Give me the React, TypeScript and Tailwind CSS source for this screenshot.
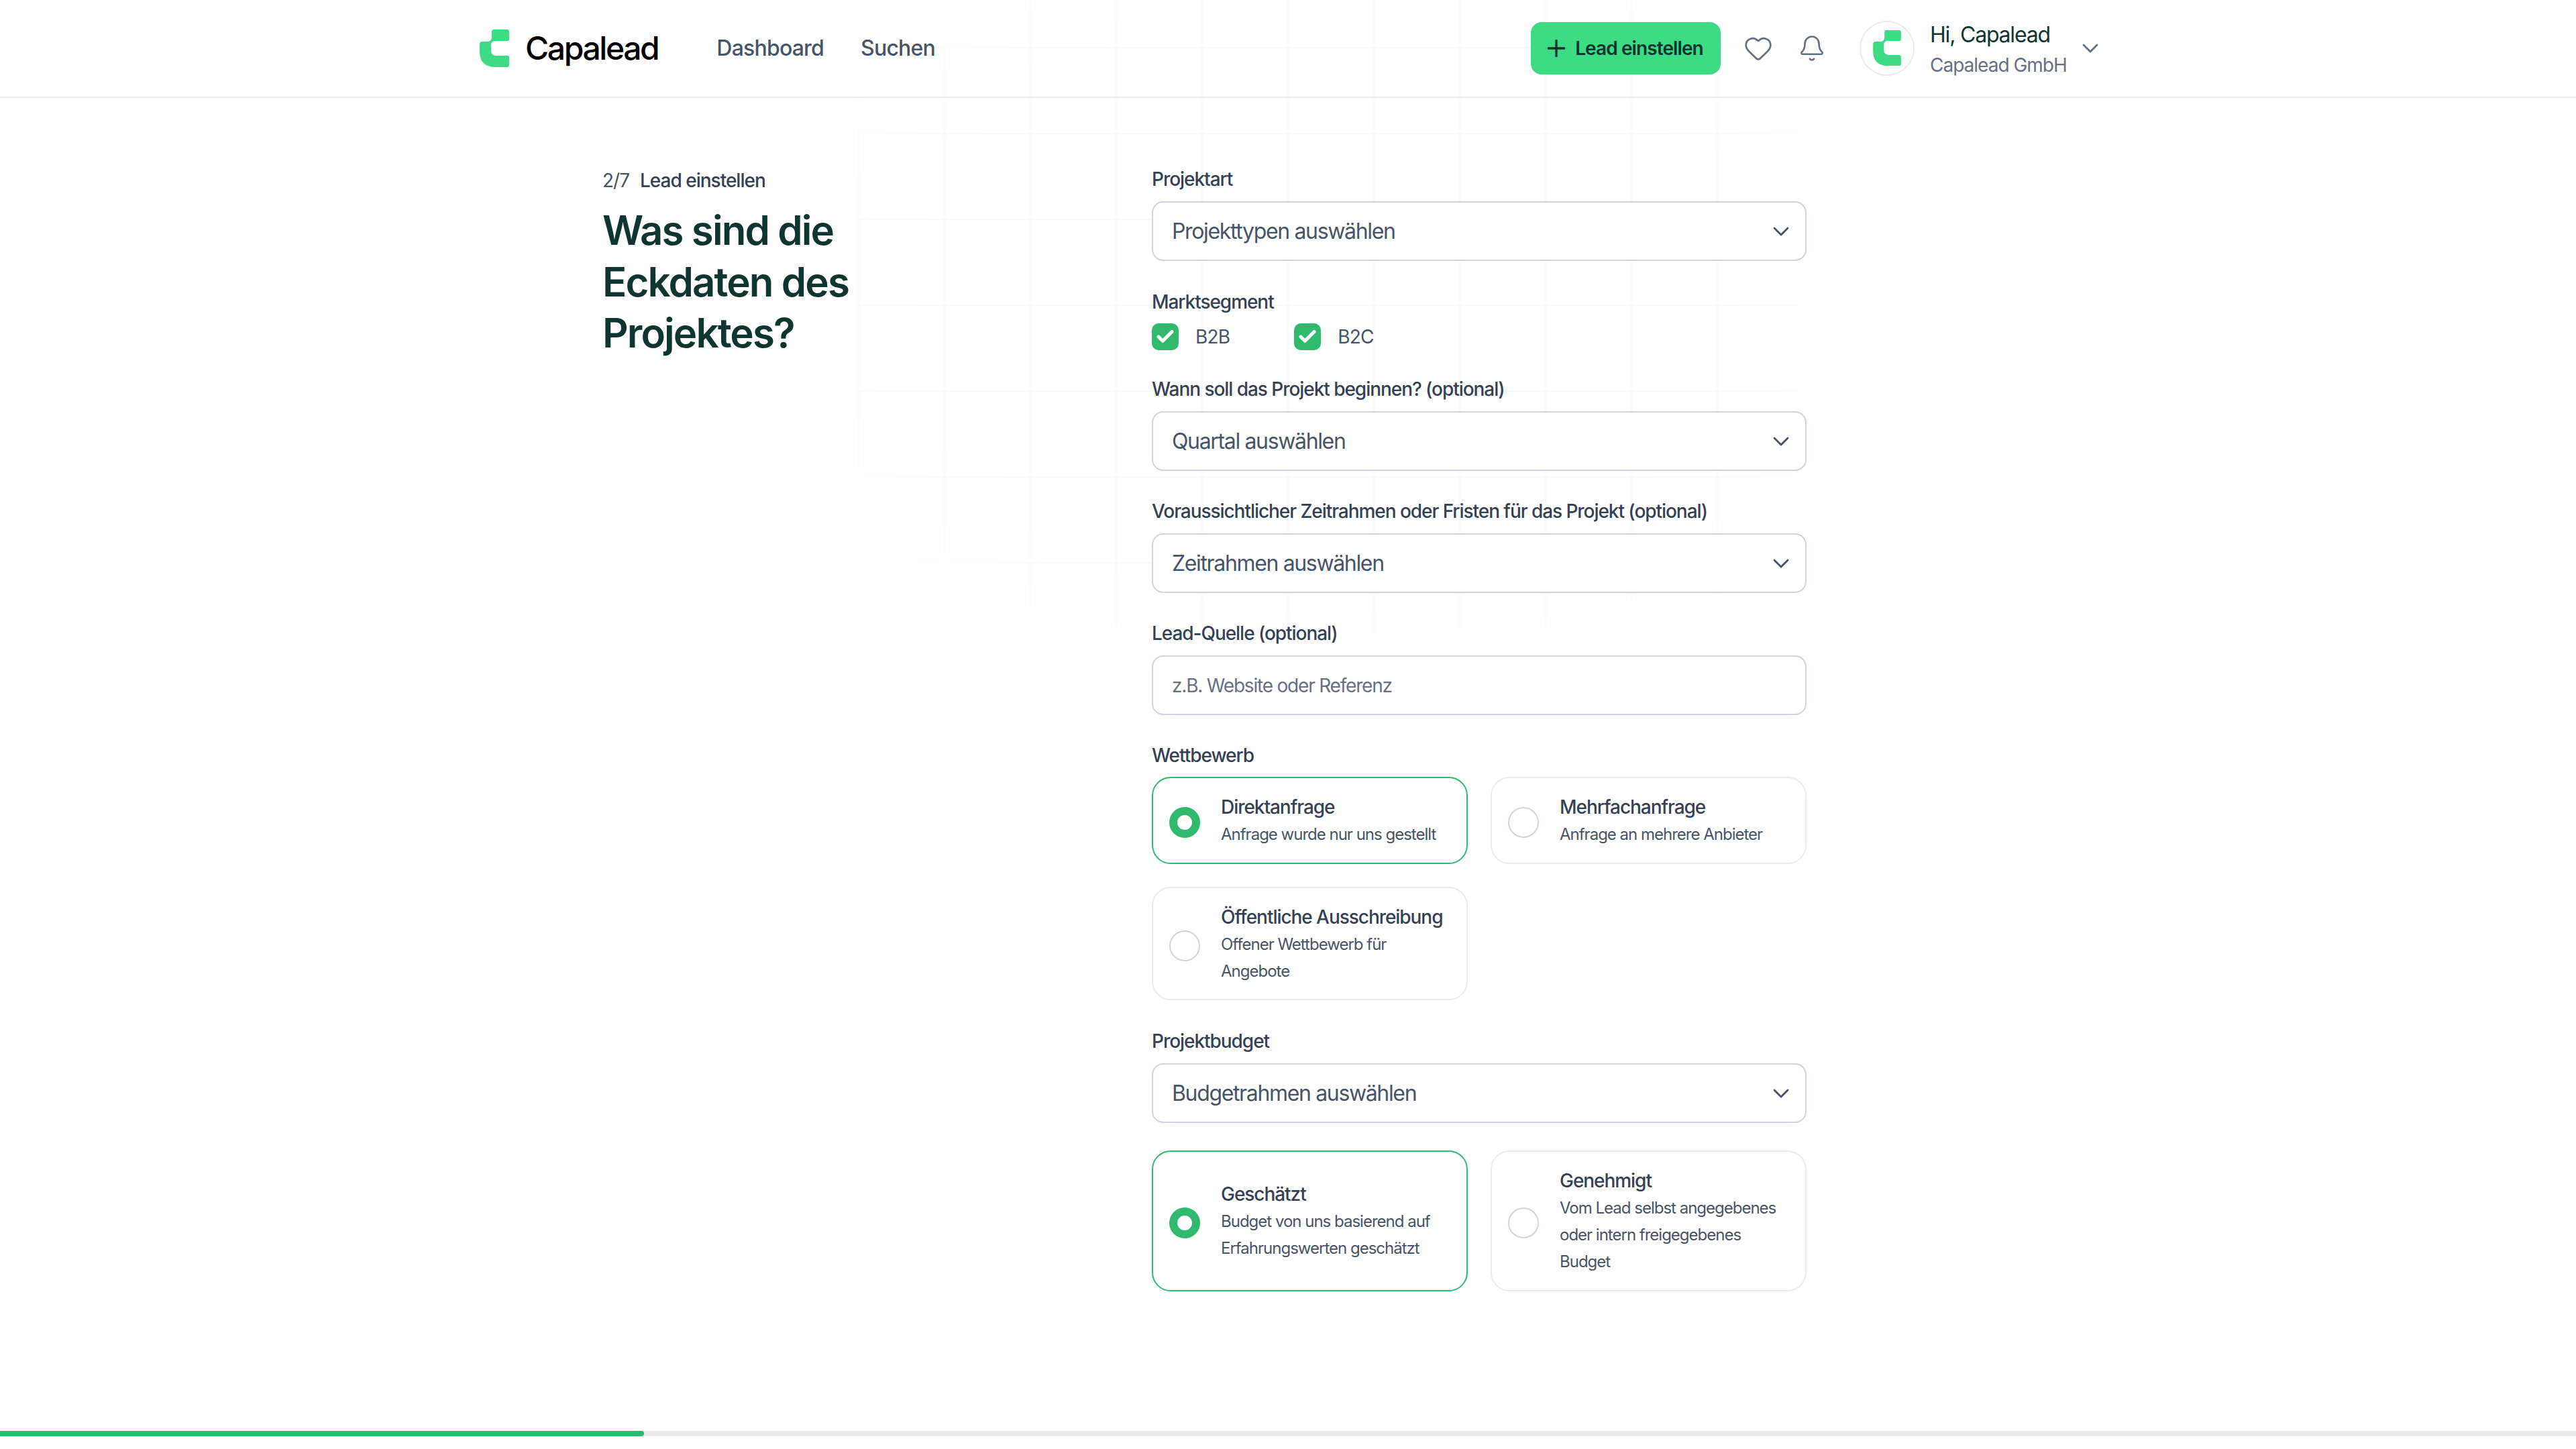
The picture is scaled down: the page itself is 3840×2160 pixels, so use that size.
import { Bell, Check, ChevronDown, Heart, Plus } from "lucide-react";

const Logo = ({ className }: { className: string }) => (
  <svg viewBox="0 0 44 57" className={className}>
    <path
      fill="#3DDC84"
      d="M18 3Q18 0 21 0H41Q44 0 44 3V14Q44 17 41 17H23Q17 17 17 23V31Q17 39 25 39H41Q44 39 44 42V53Q44 56 41 56H24Q0 56 0 33V22Q0 18 4 18H11Q18 18 18 11Z"
    />
  </svg>
);

const Label = ({ children }: { children: string }) => (
  <div className="text-[28px] leading-[40px] font-medium tracking-[-1.05px] text-[#344054]">{children}</div>
);

const SelectBox = ({ text }: { text: string }) => (
  <div className="mt-[13px] flex h-[89px] items-center justify-between rounded-[17px] border-[2.4px] border-[#d0d4e0] bg-white pl-[28px] pr-[16px]">
    <span className="text-[32px] tracking-[-1.35px] text-[#475467]">{text}</span>
    <ChevronDown className="size-[40px] text-[#475467]" strokeWidth={1.7} />
  </div>
);

const Radio = ({ on }: { on: boolean }) =>
  on ? (
    <div className="mt-[6px] size-[46px] shrink-0 rounded-full border-[12px] border-[#30ba6e] bg-white" />
  ) : (
    <div className="mt-[6px] size-[46px] shrink-0 rounded-full border-[2.4px] border-[#d0d4e0] bg-white" />
  );

const OptionCard = ({
  title,
  lines,
  on = false,
  className,
}: {
  title: string;
  lines: string[];
  on?: boolean;
  className: string;
}) => (
  <div
    className={`flex items-center gap-[31px] rounded-[28px] border-[2.4px] bg-white pl-[24px] ${className} ${
      on ? "border-[#30ba6e]" : "border-[#eaeaf0]"
    }`}
  >
    <Radio on={on} />
    <div>
      <div className="text-[28px] leading-[42px] font-medium tracking-[-1.05px] text-[#344054]">{title}</div>
      {lines.map((line) => (
        <div key={line} className="text-[24px] leading-[40px] tracking-[-1px] text-[#475467]">
          {line}
        </div>
      ))}
    </div>
  </div>
);

const CheckItem = ({ label }: { label: string }) => (
  <div className="flex items-center gap-[25px]">
    <div className="flex size-[40px] items-center justify-center rounded-[10px] bg-[#30ba6e]">
      <Check className="size-[30px] text-white" strokeWidth={4} />
    </div>
    <span className="text-[28px] leading-[40px] tracking-[-0.8px] text-[#475467]">{label}</span>
  </div>
);

export default function App() {
  return (
    <div className="relative h-[2160px] w-full overflow-hidden bg-white font-['Inter',sans-serif]">
      {/* faint grid */}
      <div className="pointer-events-none absolute left-[1279px] top-[-58px] h-[1000px] w-[1400px] bg-[linear-gradient(to_right,#f7f8fa_2px,transparent_2px),linear-gradient(to_bottom,#f7f8fa_2px,transparent_2px)] bg-[size:128px_128px] [mask-image:radial-gradient(ellipse_at_center,black_60%,transparent_90%)]" />

      {/* Header */}
      <header className="relative flex h-[146px] items-center border-b-[2.4px] border-[#eaeaf0] pl-[715px] pr-[704px]">
        <Logo className="h-[57px] w-[44px]" />
        <span className="ml-[24px] text-[48px] font-medium tracking-[-2.4px] text-black">Capalead</span>
        <nav className="ml-[87px] flex gap-[55px] text-[32px] font-medium tracking-[-0.8px] text-[#475467]">
          <span>Dashboard</span>
          <span>Suchen</span>
        </nav>
        <div className="ml-auto flex items-center">
          <button className="flex h-[78px] w-[283px] items-center justify-center gap-[8px] rounded-[16px] bg-[#3DDC84] pr-[8px] text-[28px] font-semibold tracking-[-0.9px] text-[#0f3530]">
            <Plus className="size-[40px]" strokeWidth={2} />
            Lead einstellen
          </button>
          <Heart className="ml-[34px] size-[44px] text-[#667085]" strokeWidth={1.5} />
          <Bell className="ml-[37px] size-[42px] text-[#667085]" strokeWidth={1.5} />
          <div className="ml-[50px] flex size-[82px] items-center justify-center rounded-full border-[2px] border-[#eaeaf0]">
            <Logo className="h-[54px] w-[42px]" />
          </div>
          <div className="ml-[23px] mt-[4px] w-[219px]">
            <div className="text-[32px] leading-[46px] tracking-[-1.2px] text-[#0f3530]">Hi, Capalead</div>
            <div className="text-[28px] leading-[44px] tracking-[-1px] text-[#667085]">Capalead GmbH</div>
          </div>
          <ChevronDown className="size-[40px] text-[#667085]" strokeWidth={1.7} />
        </div>
      </header>

      {/* Main */}
      <main className="relative flex pl-[898px] pt-[101px]">
        <div className="w-[819px]">
          <div className="mt-[2px] flex gap-[16px] text-[28px] leading-[40px] tracking-[-1px]">
            <span className="text-[#475467]">2/7</span>
            <span className="font-medium text-[#344054]">Lead einstellen</span>
          </div>
          <h1 className="mt-[16px] w-[500px] text-[60px] leading-[76.5px] font-semibold tracking-[-1.9px] text-[#0f3530]">
            Was sind die Eckdaten des Projektes?
          </h1>
        </div>

        <div className="w-[976px]">
          <Label>Projektart</Label>
          <SelectBox text="Projekttypen auswählen" />

          <div className="mt-[41px]">
            <Label>Marktsegment</Label>
            <div className="mt-[12px] flex gap-[96px]">
              <CheckItem label="B2B" />
              <CheckItem label="B2C" />
            </div>
          </div>

          <div className="mt-[38px]">
            <Label>Wann soll das Projekt beginnen? (optional)</Label>
            <SelectBox text="Quartal auswählen" />
          </div>

          <div className="mt-[40px]">
            <Label>Voraussichtlicher Zeitrahmen oder Fristen für das Projekt (optional)</Label>
            <SelectBox text="Zeitrahmen auswählen" />
          </div>

          <div className="mt-[40px]">
            <Label>Lead-Quelle (optional)</Label>
            <div className="mt-[13px] flex h-[89px] items-center rounded-[17px] border-[2.4px] border-[#d0d4e0] bg-white pl-[28px]">
              <span className="text-[28px] tracking-[-1.2px] text-[#667085]">z.B. Website oder Referenz</span>
            </div>
          </div>

          <div className="mt-[40px]">
            <Label>Wettbewerb</Label>
            <div className="mt-[12px] grid grid-cols-2 gap-[34px]">
              <OptionCard on className="h-[130px]" title="Direktanfrage" lines={["Anfrage wurde nur uns gestellt"]} />
              <OptionCard className="h-[130px]" title="Mehrfachanfrage" lines={["Anfrage an mehrere Anbieter"]} />
              <OptionCard
                className="h-[169px]"
                title="Öffentliche Ausschreibung"
                lines={["Offener Wettbewerb für", "Angebote"]}
              />
            </div>
          </div>

          <div className="mt-[41px]">
            <Label>Projektbudget</Label>
            <SelectBox text="Budgetrahmen auswählen" />
          </div>

          <div className="mt-[41px] grid grid-cols-2 gap-[34px]">
            <OptionCard
              on
              className="h-[210px]"
              title="Geschätzt"
              lines={["Budget von uns basierend auf", "Erfahrungswerten geschätzt"]}
            />
            <OptionCard
              className="h-[210px]"
              title="Genehmigt"
              lines={["Vom Lead selbst angegebenes", "oder intern freigegebenes", "Budget"]}
            />
          </div>
        </div>
      </main>

      {/* Progress */}
      <div className="absolute left-0 right-0 top-[2133px] h-[8px] bg-[#e9e9ee]">
        <div className="h-full w-[960px] rounded-r-full bg-[#30ba6e]" />
      </div>
    </div>
  );
}
